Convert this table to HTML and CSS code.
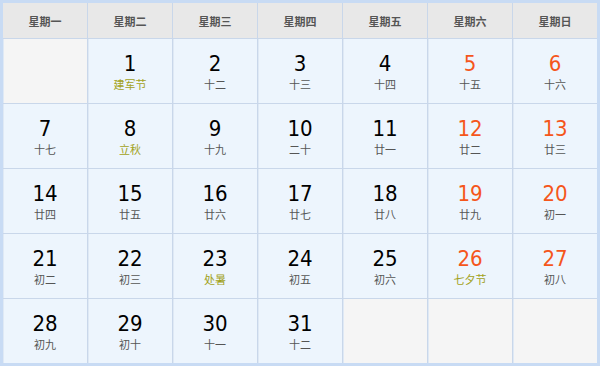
FILE: index.html
```html
<!DOCTYPE html>
<html lang="zh-CN">
<head>
<meta charset="utf-8">
<title>日历</title>
<link rel="stylesheet" href="styles.css">
</head>
<body>
<div class="cal">
  <div class="grid">
    <div class="hd">星期一</div>
    <div class="hd">星期二</div>
    <div class="hd">星期三</div>
    <div class="hd">星期四</div>
    <div class="hd">星期五</div>
    <div class="hd">星期六</div>
    <div class="hd">星期日</div>

    <div class="day empty"></div>
    <div class="day"><span class="num">1</span><span class="lunar fest">建军节</span></div>
    <div class="day"><span class="num">2</span><span class="lunar">十二</span></div>
    <div class="day"><span class="num">3</span><span class="lunar">十三</span></div>
    <div class="day"><span class="num">4</span><span class="lunar">十四</span></div>
    <div class="day wk"><span class="num">5</span><span class="lunar">十五</span></div>
    <div class="day wk"><span class="num">6</span><span class="lunar">十六</span></div>

    <div class="day"><span class="num">7</span><span class="lunar">十七</span></div>
    <div class="day"><span class="num">8</span><span class="lunar fest">立秋</span></div>
    <div class="day"><span class="num">9</span><span class="lunar">十九</span></div>
    <div class="day"><span class="num">10</span><span class="lunar">二十</span></div>
    <div class="day"><span class="num">11</span><span class="lunar">廿一</span></div>
    <div class="day wk"><span class="num">12</span><span class="lunar">廿二</span></div>
    <div class="day wk"><span class="num">13</span><span class="lunar">廿三</span></div>

    <div class="day"><span class="num">14</span><span class="lunar">廿四</span></div>
    <div class="day"><span class="num">15</span><span class="lunar">廿五</span></div>
    <div class="day"><span class="num">16</span><span class="lunar">廿六</span></div>
    <div class="day"><span class="num">17</span><span class="lunar">廿七</span></div>
    <div class="day"><span class="num">18</span><span class="lunar">廿八</span></div>
    <div class="day wk"><span class="num">19</span><span class="lunar">廿九</span></div>
    <div class="day wk"><span class="num">20</span><span class="lunar">初一</span></div>

    <div class="day"><span class="num">21</span><span class="lunar">初二</span></div>
    <div class="day"><span class="num">22</span><span class="lunar">初三</span></div>
    <div class="day"><span class="num">23</span><span class="lunar fest">处暑</span></div>
    <div class="day"><span class="num">24</span><span class="lunar">初五</span></div>
    <div class="day"><span class="num">25</span><span class="lunar">初六</span></div>
    <div class="day wk"><span class="num">26</span><span class="lunar fest">七夕节</span></div>
    <div class="day wk"><span class="num">27</span><span class="lunar">初八</span></div>

    <div class="day"><span class="num">28</span><span class="lunar">初九</span></div>
    <div class="day"><span class="num">29</span><span class="lunar">初十</span></div>
    <div class="day"><span class="num">30</span><span class="lunar">十一</span></div>
    <div class="day"><span class="num">31</span><span class="lunar">十二</span></div>
    <div class="day empty"></div>
    <div class="day empty"></div>
    <div class="day empty"></div>
  </div>
</div>
</body>
</html>
```
FILE: styles.css
```css
html, body {
  margin: 0;
  padding: 0;
  background: #ffffff;
}
.cal {
  width: 600px;
  height: 366px;
  box-sizing: border-box;
  padding: 3px;
  background: #c8dbf4;
}
.grid {
  display: grid;
  grid-template-columns: repeat(7, 84px);
  grid-template-rows: 35px repeat(5, 64px);
  gap: 1px;
  background: #c9d7ea;
}
.hd {
  background: #e8e8e8;
  color: #555555;
  font-family: "Noto Sans CJK SC", "Noto Sans", sans-serif;
  font-weight: bold;
  font-size: 11px;
  display: flex;
  align-items: center;
  justify-content: center;
}
.day {
  background: #edf5fd;
  display: flex;
  flex-direction: column;
  align-items: center;
  justify-content: center;
  padding-top: 1px;
  box-sizing: border-box;
  box-shadow: inset 1px 0 0 #dfe9f5;
}
.day.empty {
  background: #f5f5f5;
}
.num {
  font-family: "DejaVu Sans Condensed", "DejaVu Sans", sans-serif;
  font-size: 22px;
  line-height: 24px;
  color: #000000;
}
.wk .num {
  color: #f5561b;
}
.lunar {
  font-family: "Noto Sans CJK SC", "Noto Sans", sans-serif;
  font-size: 11px;
  line-height: 16px;
  color: #555555;
}
.lunar.fest {
  color: #a2a21a;
}
```
